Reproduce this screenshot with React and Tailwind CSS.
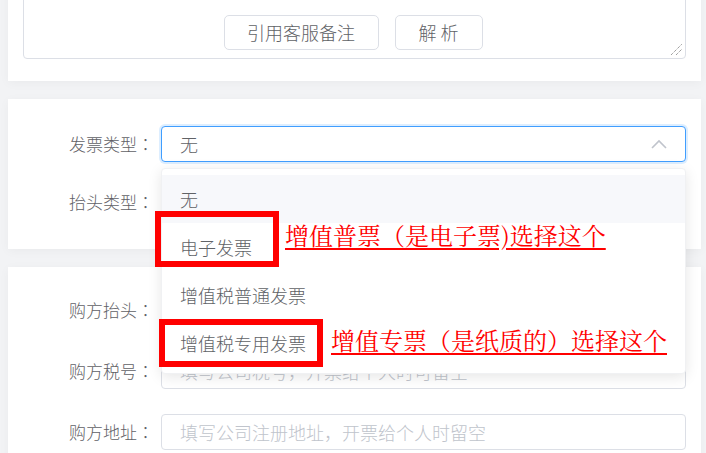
import React from "react";

function Row({ label, children, className = "" }) {
  return (
    <div className={"flex items-center " + className}>
      <div className="w-[146px] shrink-0 text-right text-[17px] leading-[20px] text-[#5f6166] font-light">
        {label}
        <span className="font-['Noto_Sans_CJK_JP',sans-serif]">：</span>
      </div>
      <div className="ml-[7px] mr-[15px] flex-1 relative">{children}</div>
    </div>
  );
}

function Input({ placeholder }) {
  return (
    <div className="h-[36px] border border-[#dcdfe6] rounded-[4px] bg-white flex items-center pl-[18px] text-[18px] font-light text-[#c0c4cc] whitespace-nowrap overflow-hidden">
      {placeholder}
    </div>
  );
}

export default function App() {
  const items = ["无", "电子发票", "增值税普通发票", "增值税专用发票"];
  return (
    <div className="relative w-[706px] h-[453px] overflow-hidden bg-[#f2f3f5] font-['Noto_Sans_CJK_SC',sans-serif]">
      <div className="pl-2 pr-[5px] -mt-[20px] flex flex-col gap-[18px]">
        {/* Card 1 */}
        <div className="bg-white px-[15px] pb-[22px] shadow-[0_2px_10px_rgba(0,0,0,0.04)]">
          <div className="relative h-[79px] border border-[#dcdfe6] rounded-[4px] flex items-end justify-center pb-[8px] gap-[16px] pr-[3px]">
            <div className="h-[35px] w-[155px] border border-[#dcdfe6] rounded-[5px] flex items-center justify-center text-[18px] font-light text-[#606266] bg-white">
              引用客服备注
            </div>
            <div className="h-[35px] w-[88px] border border-[#dcdfe6] rounded-[5px] flex items-center justify-center text-[18px] font-light text-[#606266] bg-white">
              解 析
            </div>
            <svg className="absolute right-[2px] bottom-[2px]" width="13" height="13" viewBox="0 0 13 13">
              <line x1="1" y1="12" x2="12" y2="1" stroke="#777" strokeWidth="1" strokeDasharray="1 1" />
              <line x1="6" y1="12" x2="12" y2="6" stroke="#777" strokeWidth="1" strokeDasharray="1 1" />
            </svg>
          </div>
        </div>

        {/* Card 2 */}
        <div className="relative z-10 bg-white pt-[27px] pb-[29px] flex flex-col gap-[22px] shadow-[0_2px_10px_rgba(0,0,0,0.04)]">
          <Row label="发票类型">
            <div className="h-[36px] border border-[#409eff] rounded-[4px] bg-white flex items-center justify-between pl-[18px] pr-[18px] text-[18px] font-light text-[#606266] shadow-[0_0_0_2px_rgba(64,158,255,0.18)]">
              <span>无</span>
              <svg width="16" height="10" viewBox="0 0 16 10" fill="none">
                <path d="M1 9 L8 2 L15 9" stroke="#c0c4cc" strokeWidth="1.6" />
              </svg>
            </div>
            <div className="absolute left-0 right-0 top-[42px] z-20 bg-white rounded-[4px] py-[6px] shadow-[0_3px_14px_rgba(0,0,0,0.1)] border border-[#f0f1f3]">
              {items.map((t, i) => (
                <div
                  key={t}
                  className={
                    "h-[48px] flex items-center px-[18px] text-[18px] font-light text-[#606266] " +
                    (i === 0 ? "bg-[#f7f8fb]" : "")
                  }
                >
                  {t}
                </div>
              ))}
            </div>
          </Row>
          <Row label="抬头类型">
            <Input placeholder="" />
          </Row>
        </div>

        {/* Card 3 */}
        <div className="bg-white pt-[25px] pb-[20px] flex flex-col gap-[25px] shadow-[0_2px_10px_rgba(0,0,0,0.04)]">
          <Row label="购方抬头">
            <Input placeholder="" />
          </Row>
          <Row label="购方税号">
            <Input placeholder="填写公司税号，开票给个人时可留空" />
          </Row>
          <Row label="购方地址">
            <Input placeholder="填写公司注册地址，开票给个人时留空" />
          </Row>
        </div>
      </div>

      {/* Annotations */}
      <div className="absolute left-[155px] top-[211px] w-[124px] h-[56px] border-[6px] border-[#ff0000] z-30" />
      <div className="absolute left-[159px] top-[319px] w-[164px] h-[48px] border-[6px] border-[#ff0000] z-30" />
      <div className="absolute left-[285px] top-[223px] z-30 text-[24px] leading-[24px] text-[#ff0000] underline underline-offset-[3px] whitespace-nowrap font-['Noto_Serif_CJK_SC','Liberation_Serif','Noto_Sans_CJK_SC',serif]">
        增值普票（是电子票)选择这个
      </div>
      <div className="absolute left-[331px] top-[328px] z-30 text-[24px] leading-[24px] text-[#ff0000] underline underline-offset-[3px] whitespace-nowrap font-['Noto_Serif_CJK_SC','Liberation_Serif','Noto_Sans_CJK_SC',serif]">
        增值专票（是纸质的）选择这个
      </div>
    </div>
  );
}
